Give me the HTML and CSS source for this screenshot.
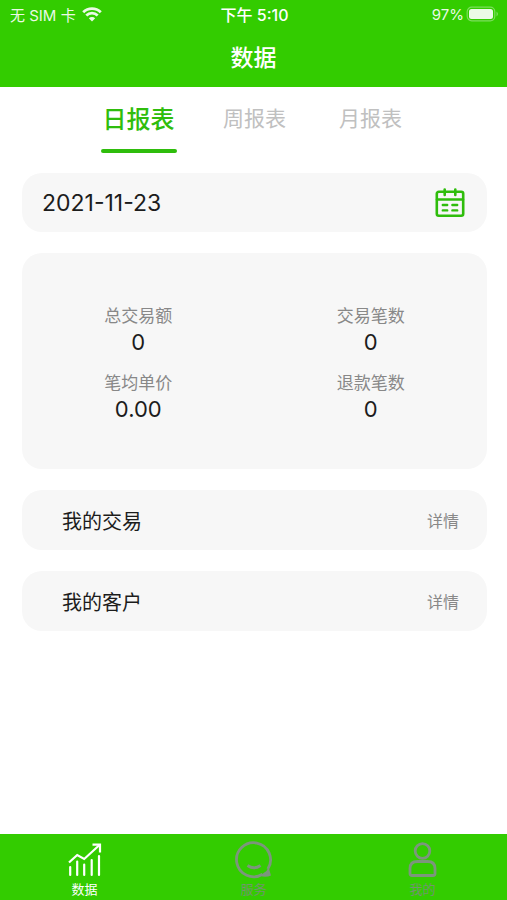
FILE: index.html
```html
<!DOCTYPE html>
<html lang="zh-CN">
<head>
<meta charset="utf-8">
<meta name="viewport" content="width=device-width, initial-scale=1">
<title>数据</title>
<link rel="stylesheet" href="styles.css">
</head>
<body>
<header class="top">
  <div class="status">
    <div class="status-side">
      <span>无 SIM 卡</span>
      <svg class="wifi" viewBox="0 0 20 15" aria-hidden="true">
        <path d="M1.2 5.2a12.6 12.6 0 0 1 17.6 0M4.3 8.5a8.2 8.2 0 0 1 11.4 0" fill="none" stroke="currentColor" stroke-width="2.8"/>
        <path d="M10 14.5 6.8 11.2a4.6 4.6 0 0 1 6.4 0z" fill="currentColor"/>
      </svg>
    </div>
    <div class="status-time">下午 5:10</div>
    <div class="status-side status-right">
      <span>97%</span>
      <svg class="battery" viewBox="0 0 33 16" aria-hidden="true">
        <rect x="1.2" y="1.2" width="27.6" height="13.6" rx="4.5" fill="none" stroke="#fff" stroke-opacity=".4" stroke-width="1.2"/>
        <rect x="3" y="3" width="24" height="10" rx="2.5" fill="#fff"/>
        <path d="M30.5 5.5q3 2.5 0 5z" fill="#fff" fill-opacity=".4"/>
      </svg>
    </div>
  </div>
  <h1 class="title">数据</h1>
</header>

<main class="content">
  <nav class="reports">
    <button class="report is-active" type="button">日报表</button>
    <button class="report" type="button">周报表</button>
    <button class="report" type="button">月报表</button>
  </nav>

  <button class="card date" type="button">
    <span>2021-11-23</span>
    <svg class="calendar" viewBox="0 0 30 30" fill="none" stroke="currentColor" stroke-width="2.6" stroke-linecap="round" aria-hidden="true">
      <rect x="1.8" y="3.8" width="26.4" height="24" rx="2"/>
      <path d="M2 11.5h26M9.7 1.5v5.5M20.3 1.5v5.5"/>
      <path d="M7.8 17h4.4M17.4 17h4.8M7.8 22.4h4.4M17.4 22.4h4.8" stroke-width="2.4"/>
    </svg>
  </button>

  <dl class="card stats">
    <div class="stat"><dt>总交易额</dt><dd>0</dd></div>
    <div class="stat"><dt>交易笔数</dt><dd>0</dd></div>
    <div class="stat"><dt>笔均单价</dt><dd>0.00</dd></div>
    <div class="stat"><dt>退款笔数</dt><dd>0</dd></div>
  </dl>

  <a class="card row" href="#transactions"><span>我的交易</span><span class="more">详情</span></a>
  <a class="card row" href="#customers"><span>我的客户</span><span class="more">详情</span></a>
</main>

<nav class="tabbar">
  <a class="tab is-active" href="#data">
    <svg class="tab-icon" viewBox="0 0 38 38" fill="none" stroke="currentColor" stroke-width="2.2" aria-hidden="true">
      <path d="M3 21.5 11.2 14 18.2 18 33.5 4"/>
      <path d="M26.5 3.6H34V11.5"/>
      <path d="M4.2 26V34M11.2 20.5V34M18.2 23.5V34M25.7 19V34M33 15V34" stroke-linecap="round"/>
    </svg>
    <span>数据</span>
  </a>
  <a class="tab" href="#service">
    <svg class="tab-icon" viewBox="0 0 38 38" fill="none" stroke="currentColor" stroke-width="2.8" aria-hidden="true">
      <path d="M32.8 28A17 17 0 1 0 27.5 33.2"/>
      <path d="M33.5 26 36 34.5Q30 37 25 34.5L31.5 30z" fill="currentColor" stroke="none"/>
      <path d="M12.5 24.5q6.500 4.500 13 0"/>
    </svg>
    <span class="tab-label">服务</span>
  </a>
  <a class="tab" href="#mine">
    <svg class="tab-icon" viewBox="0 0 38 38" fill="none" stroke="currentColor" stroke-width="2.8" aria-hidden="true">
      <circle cx="18.500" cy="10" r="7.300"/>
      <path d="M13.500 20.500H23.500C29 20.500 31 23 31 27.500V32.500Q31 34.500 29 34.500H8Q6 34.500 6 32.500V27.500C6 23 8 20.500 13.500 20.500z"/>
    </svg>
    <span class="tab-label">我的</span>
  </a>
</nav>
</body>
</html>
```
FILE: styles.css
```css
* {
  box-sizing: border-box;
}

body {
  margin: 0;
  min-height: 100vh;
  display: flex;
  flex-direction: column;
  background: #fff;
  color: #1c1c1c;
  font-family: Inter, "Noto Sans CJK SC", sans-serif;
}

button {
  border: 0;
  background: none;
  color: inherit;
  font: inherit;
  cursor: pointer;
}

a {
  color: inherit;
  text-decoration: none;
}

.top {
  background: #3c0;
  color: #fff;
}

.status {
  display: grid;
  grid-template-columns: 1fr auto 1fr;
  align-items: center;
  height: 28px;
  padding: 0 8px 0 10px;
  font-size: 15px;
}

.status-side {
  display: flex;
  align-items: center;
  gap: 6px;
  opacity: 0.9;
}

.status-right {
  justify-content: flex-end;
  gap: 2px;
}

.status-time {
  font-size: 16px;
  font-weight: 500;
}

.wifi {
  width: 20px;
  height: 15px;
}

.battery {
  width: 33px;
  height: 16px;
}

.title {
  margin: 0;
  padding-top: 2px;
  font-size: 23px;
  font-weight: 500;
  line-height: 57px;
  text-align: center;
}

.content {
  flex: 1;
  display: flex;
  flex-direction: column;
  gap: 21px;
  padding: 0 20px 20px 22px;
}

.reports {
  display: flex;
  justify-content: center;
  gap: 40px;
  height: 65px;
}

.report {
  width: 76px;
  height: 66px;
  padding: 0 0 2px;
  border-bottom: 4px solid transparent;
  color: #c0c0c0;
  font-size: 21px;
  font-weight: 400;
}

.report.is-active {
  position: relative;
  color: #2fbd0c;
  font-size: 24px;
  font-weight: 500;
}

.report.is-active::after {
  content: "";
  position: absolute;
  inset: auto 0 -4px;
  height: 4px;
  border-radius: 2px;
  background: #2fbd0c;
}

.card {
  margin: 0;
  border-radius: 20px;
  background: #f7f7f7;
}

.date {
  display: flex;
  justify-content: space-between;
  align-items: center;
  height: 59px;
  padding: 0 22px 0 20px;
  font-size: 23px;
}

.calendar {
  width: 30px;
  height: 30px;
  color: #2fbd0c;
}

.stats {
  display: grid;
  grid-template-columns: 1fr 1fr;
  gap: 14px 0;
  padding: 50px 0 46px;
  text-align: center;
}

.stat dt {
  color: #888;
  font-size: 17px;
  line-height: 26px;
}

.stat dd {
  margin: 0;
  font-size: 22px;
  line-height: 27px;
}

.row {
  display: flex;
  justify-content: space-between;
  align-items: center;
  height: 60px;
  padding: 0 28px 0 40px;
  font-size: 20px;
}

.more {
  color: #888;
  font-size: 16px;
}

.tabbar {
  display: grid;
  grid-template-columns: repeat(3, 1fr);
  height: 66px;
  background: #3c0;
}

.tab {
  display: flex;
  flex-direction: column;
  align-items: center;
  padding-top: 7px;
  color: #7c967c;
  font-size: 13px;
  line-height: 20px;
}

.tab.is-active {
  color: #fff;
}

.tab-icon {
  width: 38px;
  height: 38px;
}

.tab-label {
  color: #70966c;
}
```
